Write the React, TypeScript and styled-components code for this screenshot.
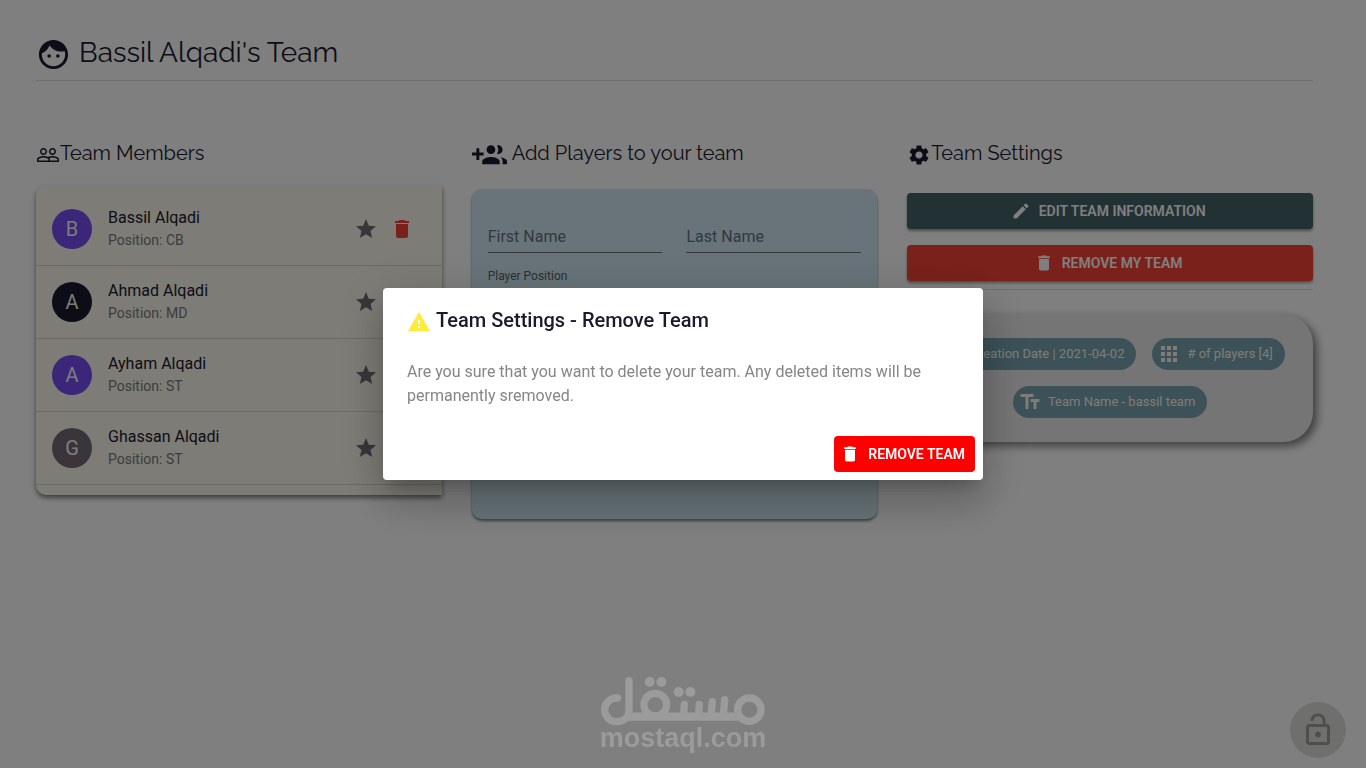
import React from "react";
import styled, { createGlobalStyle } from "styled-components";
import {
  MdFace,
  MdPeopleOutline,
  MdSettings,
  MdEdit,
  MdDelete,
  MdStar,
  MdWarning,
  MdApps,
  MdDateRange,
  MdTextFields,
  MdLockOpen,
} from "react-icons/md";

const GlobalStyle = createGlobalStyle`
  *, *::before, *::after { box-sizing: border-box; }
  body {
    margin: 0;
    background: #fff;
    color: #1a1a2e;
    font-family: Roboto, "Liberation Sans", sans-serif;
    font-size: 16px;
    line-height: 24px;
  }
`;

const Page = styled.main`
  min-height: 100vh;
  padding: 32px 53px 32px 36px;
`;

const PageHeader = styled.header`
  display: flex;
  align-items: center;
  gap: 8px;
  height: 49px;
  padding-bottom: 6px;
  border-bottom: 1px solid #dfdfdf;
  svg { margin-top: 2px; }
`;

const PageTitle = styled.h1`
  margin: 0;
  font-family: Raleway, Lato, sans-serif;
  font-size: 28px;
  font-weight: 400;
  line-height: 40px;
`;

const Columns = styled.div`
  display: grid;
  grid-template-columns: repeat(3, minmax(0, 1fr));
  gap: 30px;
  align-items: start;
  margin-top: 56px;
`;

const Column = styled.section`
  display: flex;
  flex-direction: column;
`;

const SectionHeading = styled.div<{ $gap?: number }>`
  display: flex;
  align-items: center;
  gap: ${({ $gap = 0 }) => $gap}px;
  height: 32px;
  margin-bottom: 16px;
  svg { margin-top: 4px; }
`;

const SectionTitle = styled.h2`
  margin: 0;
  font-family: Raleway, Lato, sans-serif;
  font-size: 20px;
  font-weight: 400;
  line-height: 32px;
`;

const MemberList = styled.ul`
  margin: 0;
  padding: 8px 0 10px;
  list-style: none;
  background: #fcf8ec;
  border-radius: 10px 0 0 10px;
  box-shadow: 0 3px 5px rgba(0, 0, 0, 0.5);
`;

const Member = styled.li`
  display: flex;
  align-items: center;
  gap: 16px;
  height: 73px;
  padding: 0 32px 0 16px;
  border-bottom: 1px solid #d8d5cb;
`;

const Avatar = styled.span<{ $color: string }>`
  display: grid;
  place-items: center;
  width: 40px;
  height: 40px;
  border-radius: 50%;
  background: ${({ $color }) => $color};
  color: #fcf8ec;
  font-size: 20px;
`;

const MemberText = styled.div`
  flex: 1;
  padding-bottom: 2px;
`;

const MemberName = styled.div`
  line-height: 24px;
`;

const MemberPosition = styled.div`
  color: #7b7980;
  font-size: 14px;
  line-height: 20px;
`;

const IconButton = styled.button<{ $color: string }>`
  display: grid;
  margin: 0 -4px 0 0;
  padding: 0;
  border: 0;
  background: none;
  color: ${({ $color }) => $color};
  cursor: pointer;
`;

const PlayerForm = styled.form`
  display: grid;
  grid-template-columns: 1fr 1fr;
  column-gap: 24px;
  align-content: start;
  min-height: 330px;
  margin-top: 4px;
  padding: 32px 16px;
  border-radius: 10px;
  background: #d0e8f2;
  box-shadow: 0 2px 3px rgba(0, 0, 0, 0.5);
`;

const Field = styled.div`
  display: grid;
  height: 32px;
  border-bottom: 1px solid #6d6f79;
  > * { grid-area: 1 / 1; }
`;

const FieldLabel = styled.label`
  align-self: center;
  color: #65727b;
  pointer-events: none;
`;

const FieldInput = styled.input`
  width: 100%;
  border: 0;
  background: none;
  font: inherit;
  outline: none;
`;

const PositionField = styled.div`
  display: flex;
  flex-direction: column;
  grid-column: 1 / -1;
  gap: 4px;
  margin-top: 15px;
`;

const SmallLabel = styled.label`
  color: #56616a;
  font-size: 12px;
  line-height: 16px;
`;

const PositionSelect = styled.select`
  height: 32px;
  border: 0;
  border-bottom: 1px solid #6d6f79;
  background: none;
  font: inherit;
`;

const Button = styled.button<{ $bg: string; $flat?: boolean }>`
  display: flex;
  align-items: center;
  justify-content: center;
  gap: 8px;
  height: 36px;
  padding: 0 ${({ $flat }) => ($flat ? "10px 0 6px" : "16px 0 12px")};
  border: 0;
  border-radius: 4px;
  background: ${({ $bg }) => $bg};
  box-shadow: ${({ $flat }) => ($flat ? "none" : "0 2px 3px rgba(0, 0, 0, 0.4)")};
  color: #fff;
  font-family: inherit;
  font-size: 14px;
  font-weight: 600;
  line-height: 24px;
  text-transform: uppercase;
  cursor: pointer;
`;

const ButtonStack = styled.div`
  display: flex;
  flex-direction: column;
  gap: 16px;
  margin-top: 8px;
  padding-bottom: 8px;
  border-bottom: 1px solid #dfdfdf;
`;

const InfoCard = styled.div`
  display: flex;
  flex-wrap: wrap;
  justify-content: center;
  gap: 16px;
  margin-top: 24px;
  padding: 24px 16px;
  border-radius: 30px;
  background: #ebebeb;
  box-shadow: 4px 4px 8px rgba(0, 0, 0, 0.5);
`;

const Chip = styled.span`
  display: flex;
  align-items: center;
  gap: 6px;
  height: 32px;
  padding: 0 12px 0 5px;
  border-radius: 16px;
  background: #79a3b1;
  color: #fcf8ec;
  font-size: 13px;
`;

const LockButton = styled.button`
  position: fixed;
  right: 20px;
  bottom: 10px;
  display: grid;
  place-items: center;
  width: 56px;
  height: 56px;
  padding: 0;
  border: 0;
  border-radius: 50%;
  background: #dededb;
  color: #9c9c9a;
`;

const Backdrop = styled.div`
  position: fixed;
  inset: 0;
  display: grid;
  place-items: center;
  background: rgba(0, 0, 0, 0.5);
`;

const Dialog = styled.div`
  width: min(600px, calc(100vw - 64px));
  border-radius: 4px;
  background: #fff;
  box-shadow:
    0 11px 15px -7px rgba(0, 0, 0, 0.2),
    0 24px 38px 3px rgba(0, 0, 0, 0.14),
    0 9px 46px 8px rgba(0, 0, 0, 0.12);
`;

const DialogHeader = styled.div`
  display: flex;
  align-items: center;
  gap: 5px;
  padding: 16px 24px;
  svg { margin-top: 4px; }
`;

const DialogTitle = styled.h2`
  margin: 0;
  font-size: 20px;
  font-weight: 500;
  line-height: 32px;
`;

const DialogText = styled.p`
  margin: 0;
  padding: 8px 24px 20px;
  color: #85858a;
`;

const DialogActions = styled.div`
  display: flex;
  justify-content: flex-end;
  padding: 8px;
`;

const Watermark = styled.div`
  position: fixed;
  left: 0;
  right: 0;
  bottom: 18px;
  display: flex;
  flex-direction: column;
  align-items: center;
  color: #9b9b9b;
  pointer-events: none;
`;

const WatermarkText = styled.span`
  font-family: "Liberation Sans", Arial, sans-serif;
  font-size: 27px;
  font-weight: 700;
  line-height: 24px;
`;

const GroupAddIcon = () => (
  <svg width="35" height="35" viewBox="0 0 24 24" fill="currentColor" aria-hidden="true">
    <path d="M8 10H5V7H3v3H0v2h3v3h2v-3h3v-2zm10 1c1.66 0 2.99-1.34 2.99-3S19.66 5 18 5c-.32 0-.63.05-.91.14.57.81.9 1.79.9 2.86s-.34 2.04-.9 2.86c.28.09.59.14.91.14zm-5 0c1.66 0 2.99-1.34 2.99-3S14.66 5 13 5c-1.66 0-3 1.34-3 3s1.34 3 3 3zm6.62 2.16c.83.73 1.38 1.66 1.38 2.84v2h3v-2c0-1.54-2.37-2.49-4.38-2.84zM13 13c-2 0-6 1-6 3v2h12v-2c0-2-4-3-6-3z" />
  </svg>
);

const WatermarkLogo = () => (
  <svg width="166" height="50" viewBox="60 48 498 150" fill="none" stroke="currentColor" strokeWidth="22" strokeLinecap="round" aria-hidden="true">
    <path d="M112 114A36 36 0 0 0 74 150A36 36 0 0 0 110 185C132 185 147 172 147 150V62" />
    <path d="M136 170H484" strokeWidth="25" strokeLinecap="butt" />
    <circle cx="226" cy="134" r="34" />
    <circle cx="508" cy="149" r="35" />
    <path d="M313 133L311 166M358 133L356 166M397 125L393 166M434 119L430 166" />
    <g fill="currentColor" stroke="none">
      <circle cx="209" cy="66" r="15" />
      <circle cx="244" cy="66" r="15" />
      <circle cx="296" cy="96" r="15" />
      <circle cx="331" cy="96" r="15" />
    </g>
  </svg>
);

const members = [
  { name: "Bassil Alqadi", position: "CB", color: "#764cf4", removable: true },
  { name: "Ahmad Alqadi", position: "MD", color: "#1a1a2e", removable: false },
  { name: "Ayham Alqadi", position: "ST", color: "#764cf4", removable: false },
  { name: "Ghassan Alqadi", position: "ST", color: "#736b77", removable: false },
];

const RemoveSlot = styled.span`
  width: 24px;
  margin-right: -4px;
`;

export default function App() {
  return (
    <>
      <GlobalStyle />
      <Page>
        <PageHeader>
          <MdFace size={35} />
          <PageTitle>Bassil Alqadi's Team</PageTitle>
        </PageHeader>
        <Columns>
          <Column>
            <SectionHeading>
              <MdPeopleOutline size={24} />
              <SectionTitle>Team Members</SectionTitle>
            </SectionHeading>
            <MemberList>
              {members.map((member) => (
                <Member key={member.name}>
                  <Avatar $color={member.color}>{member.name[0]}</Avatar>
                  <MemberText>
                    <MemberName>{member.name}</MemberName>
                    <MemberPosition>Position: {member.position}</MemberPosition>
                  </MemberText>
                  <IconButton type="button" $color="#736b77" aria-label={`Star ${member.name}`}>
                    <MdStar size={24} />
                  </IconButton>
                  {member.removable ? (
                    <IconButton type="button" $color="#f44336" aria-label={`Remove ${member.name}`}>
                      <MdDelete size={24} />
                    </IconButton>
                  ) : (
                    <RemoveSlot />
                  )}
                </Member>
              ))}
            </MemberList>
          </Column>
          <Column>
            <SectionHeading $gap={5}>
              <GroupAddIcon />
              <SectionTitle>Add Players to your team</SectionTitle>
            </SectionHeading>
            <PlayerForm>
              <Field>
                <FieldInput id="first-name" />
                <FieldLabel htmlFor="first-name">First Name</FieldLabel>
              </Field>
              <Field>
                <FieldInput id="last-name" />
                <FieldLabel htmlFor="last-name">Last Name</FieldLabel>
              </Field>
              <PositionField>
                <SmallLabel htmlFor="position">Player Position</SmallLabel>
                <PositionSelect id="position">
                  <option>CB</option>
                  <option>MD</option>
                  <option>ST</option>
                </PositionSelect>
              </PositionField>
            </PlayerForm>
          </Column>
          <Column>
            <SectionHeading>
              <MdSettings size={24} />
              <SectionTitle>Team Settings</SectionTitle>
            </SectionHeading>
            <ButtonStack>
              <Button type="button" $bg="#456268">
                <MdEdit size={20} />
                Edit team information
              </Button>
              <Button type="button" $bg="#f44336">
                <MdDelete size={20} />
                Remove my team
              </Button>
            </ButtonStack>
            <InfoCard>
              <Chip>
                <MdDateRange size={24} />
                Creation Date | 2021-04-02
              </Chip>
              <Chip>
                <MdApps size={24} />
                # of players [4]
              </Chip>
              <Chip>
                <MdTextFields size={24} />
                Team Name - bassil team
              </Chip>
            </InfoCard>
          </Column>
        </Columns>
        <LockButton type="button" aria-label="Unlock">
          <MdLockOpen size={36} />
        </LockButton>
      </Page>
      <Backdrop>
        <Dialog role="dialog" aria-modal="true" aria-labelledby="dialog-title">
          <DialogHeader>
            <MdWarning size={24} color="#ffeb3b" />
            <DialogTitle id="dialog-title">Team Settings - Remove Team</DialogTitle>
          </DialogHeader>
          <DialogText>
            Are you sure that you want to delete your team. Any deleted items will be permanently sremoved.
          </DialogText>
          <DialogActions>
            <Button type="button" $bg="#ff0000" $flat>
              <MdDelete size={20} />
              Remove team
            </Button>
          </DialogActions>
        </Dialog>
      </Backdrop>
      <Watermark>
        <WatermarkLogo />
        <WatermarkText>mostaql.com</WatermarkText>
      </Watermark>
    </>
  );
}
